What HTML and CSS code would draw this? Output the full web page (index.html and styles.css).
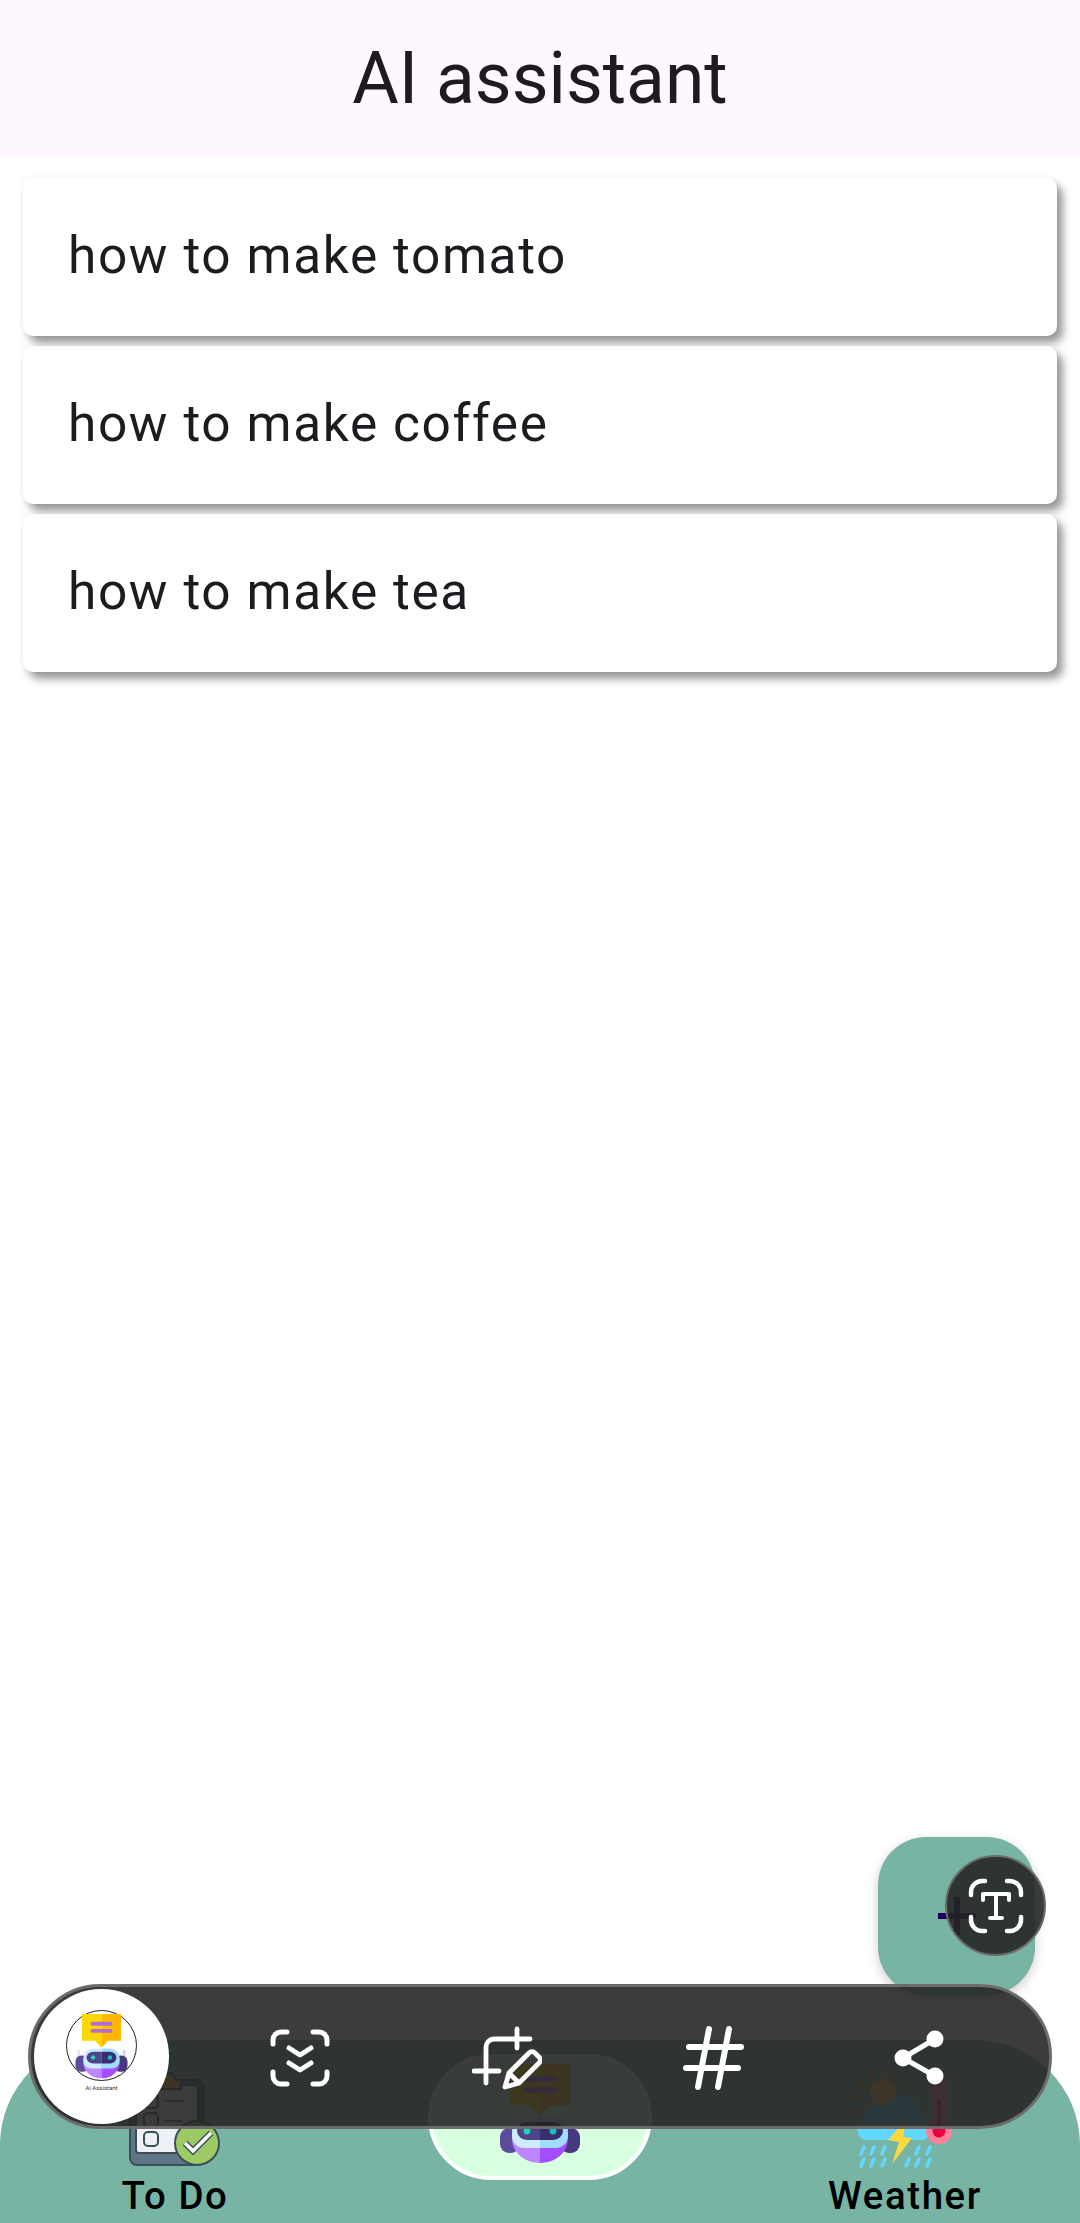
FILE: index.html
```html
<!DOCTYPE html>
<html lang="en">
<head>
<meta charset="utf-8">
<title>AI assistant</title>
<link rel="stylesheet" href="styles.css">
</head>
<body>
<svg class="defs" width="0" height="0" aria-hidden="true">
  <symbol id="robot" viewBox="0 0 100 100">
    <rect x="13" y="55" width="4" height="20" rx="2" fill="#E4E2F4"/>
    <rect x="83" y="55" width="4" height="20" rx="2" fill="#D6D2EC"/>
    <rect x="10" y="64" width="20" height="25" rx="9" fill="#5B4B9A"/>
    <rect x="70" y="64" width="20" height="25" rx="9" fill="#46397F"/>
    <path d="M22 75a28 24 0 0 0 28 24V70H22z" fill="#BD85FF"/>
    <path d="M78 75a28 24 0 0 1-28 24V70h28z" fill="#A44DFF"/>
    <path d="M50 53H37a15 15 0 0 0-15 15v4a12 12 0 0 0 12 12h16z" fill="#CDEBFF"/>
    <path d="M50 53h13a15 15 0 0 1 15 15v4a12 12 0 0 1-12 12H50z" fill="#9FDCFF"/>
    <path d="M50 58H37a10 9 0 0 0 0 18h13z" fill="#4F4389"/>
    <path d="M50 58h13a10 9 0 0 1 0 18H50z" fill="#3A2F6E"/>
    <circle cx="37" cy="67" r="3.4" fill="#1FD5B5"/>
    <circle cx="63" cy="67" r="3.4" fill="#17BFC7"/>
    <path d="M20 0h30v52l-10-11H20z" fill="#FFD700"/>
    <path d="M80 0H50v52l10-11h20z" fill="#FFB700"/>
    <path d="M36 15h28M36 26h28" stroke="#B36CD6" stroke-width="6" stroke-linecap="round" fill="none"/>
  </symbol>
</svg>

<header class="app-bar"><h1 class="app-title">AI assistant</h1></header>

<main class="list">
  <article class="card">how to make tomato</article>
  <article class="card">how to make coffee</article>
  <article class="card">how to make tea</article>
</main>

<button class="fab" type="button" aria-label="Add">
  <svg viewBox="0 0 38 38" width="38" height="38"><path d="M0 19h38M19 0v38" stroke="#21005D" stroke-width="6" fill="none"/></svg>
</button>

<nav class="bottom-nav">
  <div class="nav-item">
    <svg class="nav-icon" viewBox="0 0 100 100" width="100" height="100">
      <rect x="5" y="10" width="73" height="85" rx="7" fill="#5E7686" stroke="#3E4E59" stroke-width="2"/>
      <rect x="11" y="15" width="62" height="68" rx="3" fill="#EDF1F5" stroke="#3E4E59" stroke-width="2"/>
      <path d="M32 19v-9h6a6 7 0 0 1 12 0h6v9z" fill="#F2B63C" stroke="#3E4E59" stroke-width="2"/>
      <g fill="#EDF1F5" stroke="#3E4E59" stroke-width="2">
        <rect x="19" y="24" width="14" height="14" rx="4"/>
        <rect x="19" y="43" width="14" height="14" rx="4"/>
        <rect x="19" y="62" width="14" height="14" rx="4"/>
      </g>
      <path d="M40 31h18M40 51h18" stroke="#3E4E59" stroke-width="1.5" fill="none"/>
      <circle cx="72" cy="73" r="22" fill="#9CCB66" stroke="#3E4E59" stroke-width="2"/>
      <path d="M60 73l8 8 18-18" stroke="#3E4E59" stroke-width="6.5" fill="none" stroke-linejoin="miter"/>
      <path d="M60 73l8 8 18-18" stroke="#fff" stroke-width="3.5" fill="none" stroke-linejoin="miter"/>
    </svg>
    <span class="nav-label">To Do</span>
  </div>
  <div class="nav-active">
    <svg class="robot-nav" width="100" height="100"><use href="#robot"/></svg>
  </div>
  <div class="nav-item">
    <svg class="nav-icon" viewBox="0 0 100 100" width="100" height="100">
      <g stroke="#F7A73A" stroke-width="3" stroke-linecap="round">
        <path d="M28 0v6M14 4l3 5M42 4l-3 5M3 14l6 3M52 14l-6 3M1 27h7M5 40l6-3"/>
      </g>
      <circle cx="28" cy="22" r="13" fill="#FFC24A"/>
      <path d="M10 70a8 8 0 0 1-7-8 10 10 0 0 1 8-14 10 10 0 0 1 1-6 11 11 0 0 1 18-3 18 18 0 0 1 36 9 10 10 0 0 1 10 11 10 10 0 0 1-7 11z" fill="#60D8FF"/>
      <path d="M52 48L33 70l11 2-7 22 20-26-9-1z" fill="#FFD83D"/>
      <rect x="77" y="7" width="16" height="55" rx="8" fill="#FF8BA0"/>
      <circle cx="84" cy="61" r="13" fill="#FF7F98"/>
      <path d="M84 30v28" stroke="#E6003E" stroke-width="3"/>
      <circle cx="84" cy="61" r="6.5" fill="#E6003E"/>
      <g stroke="#60D8FF" stroke-width="3.6" stroke-linecap="round">
        <path d="M9 77l-3 7M19 77l-3 7M30 77l-3 7M64 77l-3 7M75 77l-3 7M9 89l-3 7M19 89l-3 7M30 89l-3 7M54 89l-3 7M64 89l-3 7M75 89l-3 7"/>
      </g>
    </svg>
    <span class="nav-label">Weather</span>
  </div>
</nav>

<aside class="toolbar">
  <div class="thumb">
    <div class="thumb-ring"><svg width="65" height="65"><use href="#robot"/></svg></div>
    <span class="thumb-text">Ai Assistant</span>
  </div>
  <svg class="tool tool-first" viewBox="0 0 70 70" width="70" height="70" fill="none" stroke="#fff" stroke-width="5" stroke-linecap="round" stroke-linejoin="round">
    <path d="M8 22v-4a8 8 0 0 1 8-8h6M48 10h6a8 8 0 0 1 8 8v4M8 50v4a8 8 0 0 0 8 8h6M48 62h6a8 8 0 0 0 8-8v-4"/>
    <path d="M24 26l11 7 11-7M24 41l11 7 11-7"/>
  </svg>
  <svg class="tool" viewBox="0 0 70 70" width="70" height="70" fill="none" stroke="#fff" stroke-width="4.8" stroke-linecap="round" stroke-linejoin="round">
    <path d="M2 49h25M14 61V25a8 8 0 0 1 8-8h36M45 7v19"/>
    <path d="M33 65l4-14 20-20a4 4 0 0 1 6 0l4 4a4 4 0 0 1 0 6L47 61zM37 51l10 10"/>
  </svg>
  <svg class="tool" viewBox="0 0 70 70" width="70" height="70" fill="none" stroke="#fff" stroke-width="6" stroke-linecap="round">
    <path d="M11 25h52M8 46h52M31 7L20 65M51 7L40 65"/>
  </svg>
  <svg class="tool" viewBox="0 0 70 70" width="70" height="70" fill="#fff" stroke="#fff" stroke-width="5">
    <path d="M18 36l32-19M18 36l32 18" fill="none"/>
    <circle cx="50" cy="17" r="6"/><circle cx="18" cy="36" r="6"/><circle cx="50" cy="54" r="6"/>
  </svg>
</aside>

<aside class="text-bubble">
  <svg viewBox="0 0 70 70" width="70" height="70" fill="none" stroke="#fff" stroke-width="4.5" stroke-linecap="round" stroke-linejoin="round">
    <path d="M10 24v-3a11 11 0 0 1 11-11h3M46 10h3a11 11 0 0 1 11 11v3M10 46v3a11 11 0 0 0 11 11h3M46 60h3a11 11 0 0 0 11-11v-3"/>
    <path d="M22 29v-6h26v6M35 23v24M29 47h12" stroke-width="4"/>
  </svg>
</aside>
</body>
</html>
```

FILE: styles.css
```css
* { box-sizing: border-box; }

html, body { margin: 0; padding: 0; }

body {
  position: relative;
  width: 1080px;
  height: 2223px;
  overflow: hidden;
  display: flex;
  flex-direction: column;
  background: #fff;
  font-family: Roboto, "Noto Sans", sans-serif;
  color: #1d1b20;
}

.defs { position: absolute; }

.app-bar {
  height: 157px;
  flex: none;
  display: flex;
  align-items: center;
  justify-content: center;
  background: #fef7ff;
}

.app-title {
  margin: 0;
  font-size: 71.4px;
  font-weight: 400;
  line-height: 88px;
}

.list {
  flex: 1;
  display: flex;
  flex-direction: column;
  gap: 10.5px;
  padding: 21px 23px 0 23px;
}

.card {
  height: 157.5px;
  display: flex;
  align-items: center;
  padding: 0 0 3px 45px;
  background: #fff;
  border-radius: 10px;
  font-size: 51.4px;
  letter-spacing: 1.6px;
  box-shadow: 6px 7px 9px rgba(0, 0, 0, 0.4), 0 0 7px rgba(0, 0, 0, 0.06);
}

.fab {
  position: absolute;
  left: 878px;
  top: 1837px;
  width: 157px;
  height: 158px;
  padding: 0;
  display: flex;
  align-items: center;
  justify-content: center;
  border: 0;
  border-radius: 48px;
  background: #78b4a4;
  box-shadow: 0 4px 12px rgba(0, 0, 0, 0.2);
}

.bottom-nav {
  height: 183px;
  flex: none;
  display: flex;
  justify-content: space-between;
  padding: 0 75px;
  background: #78b4a4;
  border-radius: 105px 105px 0 0;
}

.nav-item {
  width: 200px;
  padding-top: 30px;
  display: flex;
  flex-direction: column;
  align-items: center;
}

.nav-icon { display: block; flex: none; }

.nav-label {
  margin-top: 2px;
  font-size: 38.4px;
  font-weight: 500;
  line-height: 48px;
  letter-spacing: 1.6px;
  color: #000;
}

.nav-active {
  width: 224px;
  height: 126px;
  margin-top: 14px;
  display: flex;
  justify-content: center;
  padding-top: 6px;
  background: #d8ffe0;
  border: 4px solid #fff;
  border-radius: 63px;
}

.robot-nav { display: block; }

.toolbar {
  position: absolute;
  left: 28px;
  top: 1984px;
  width: 1024px;
  height: 145px;
  display: flex;
  align-items: center;
  padding-left: 3px;
  background: rgba(36, 36, 36, 0.89);
  border: 3px solid #6c6c6c;
  border-radius: 73px;
}

.thumb {
  width: 135px;
  height: 135px;
  flex: none;
  display: flex;
  flex-direction: column;
  align-items: center;
  padding-top: 21px;
  background: #fff;
  border-radius: 50%;
}

.thumb-ring {
  width: 71px;
  height: 71px;
  flex: none;
  display: flex;
  justify-content: center;
  align-items: flex-end;
  padding-bottom: 1px;
  border: 1px solid #222;
  border-radius: 50%;
}

.thumb-text {
  margin-top: 3px;
  font-size: 6px;
  line-height: 8px;
  color: #333;
}

.tool { display: block; flex: none; margin-left: 136.7px; }

.tool-first { margin-left: 96px; }

.text-bubble {
  position: absolute;
  left: 945px;
  top: 1855px;
  width: 101px;
  height: 101px;
  display: flex;
  align-items: center;
  justify-content: center;
  background: rgba(36, 36, 36, 0.89);
  border: 2px solid #6c6c6c;
  border-radius: 50%;
}
```
